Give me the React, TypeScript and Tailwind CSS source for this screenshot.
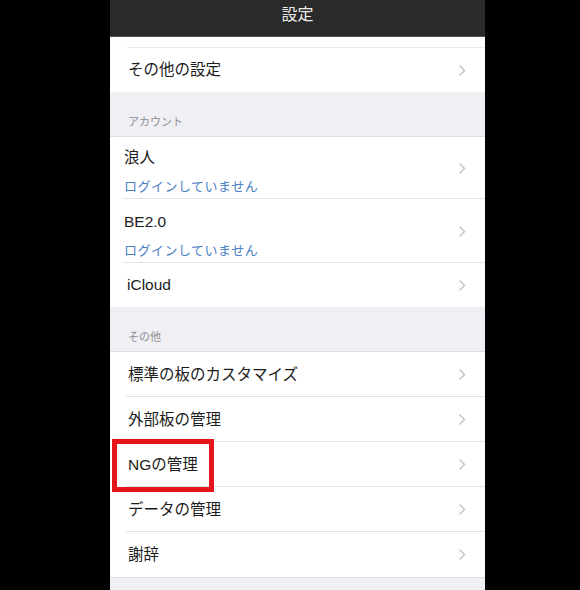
import React from 'react';

const jp = { fontFamily: '"Liberation Sans", "Noto Sans CJK JP", sans-serif' };

const Chevron = () => (
  <svg width="8" height="13" viewBox="0 0 8 13" className="shrink-0">
    <polyline points="1.5,1.5 6.5,6.5 1.5,11.5" fill="none" stroke="#c7c7cc" strokeWidth="1.6" />
  </svg>
);

const Row: React.FC<{ label: string; last?: boolean; h?: string }> = ({ label, last, h = 'h-[45px]' }) => (
  <div className={`relative flex items-center justify-between ${h} pl-[18px] pr-[19px] bg-white`}>
    <span className="text-[15.5px] text-[#1c1c1c]">{label}</span>
    <Chevron />
    {!last && <div className="absolute left-[16px] right-0 bottom-0 h-px bg-[#e2e2e4]"></div>}
  </div>
);

const AccountRow: React.FC<{ name: string; h: string; pt: string; last?: boolean }> = ({ name, h, pt, last }) => (
  <div className={`relative flex items-center justify-between ${h} pl-[14px] pr-[19px] bg-white`}>
    <div className={`flex flex-col self-start ${pt}`}>
      <span className="text-[15.5px] leading-[20px] text-[#1c1c1c]">{name}</span>
      <span className="mt-[10px] text-[13px] leading-[18px] text-[#4a7fc3] tracking-[0.5px]">ログインしていません</span>
    </div>
    <Chevron />
    {!last && <div className="absolute left-[13px] right-0 bottom-0 h-px bg-[#e2e2e4]"></div>}
  </div>
);

const SectionHeader: React.FC<{ label: string }> = ({ label }) => (
  <div className="h-[45px] bg-[#efeff4] flex items-end pl-[18px] pb-[7px] border-b border-[#dedee2]">
    <span className="text-[11px] leading-[14px] text-[#8e8e93]">{label}</span>
  </div>
);

export default function App() {
  return (
    <div className="w-[580px] h-[590px] bg-black flex pl-[110px] overflow-hidden" style={jp}>
      <div className="relative w-[375px] h-[590px] flex flex-col bg-[#efeff4]">
        <div className="h-[37px] bg-[#2a2a2a] flex justify-center pt-[5px] border-b border-[#555]">
          <span className="text-[16px] leading-[20px] text-[#ececec]">設定</span>
        </div>
        <div className="h-[11px] bg-white relative">
          <div className="absolute left-[17px] right-0 bottom-0 h-px bg-[#ececee]"></div>
        </div>
        <Row label="その他の設定" h="h-[44px]" last />
        <SectionHeader label="アカウント" />
        <AccountRow name="浪人" h="h-[62px]" pt="pt-[11px]" />
        <AccountRow name="BE2.0" h="h-[64px]" pt="pt-[13px]" />
        <div className="relative flex items-center justify-between h-[44px] pl-[17px] pr-[19px] bg-white">
          <span className="text-[15.5px] text-[#1c1c1c]">iCloud</span>
          <Chevron />
        </div>
        <SectionHeader label="その他" />
        <Row label="標準の板のカスタマイズ" />
        <Row label="外部板の管理" />
        <Row label="NGの管理" />
        <Row label="データの管理" />
        <Row label="謝辞" last />
        <div className="flex-1 bg-[#efeff4] border-t border-[#dedee2]"></div>
        <div className="absolute left-[2px] top-[439px] w-[102px] h-[53px] border-[5px] border-[#e5141d]"></div>
      </div>
    </div>
  );
}
